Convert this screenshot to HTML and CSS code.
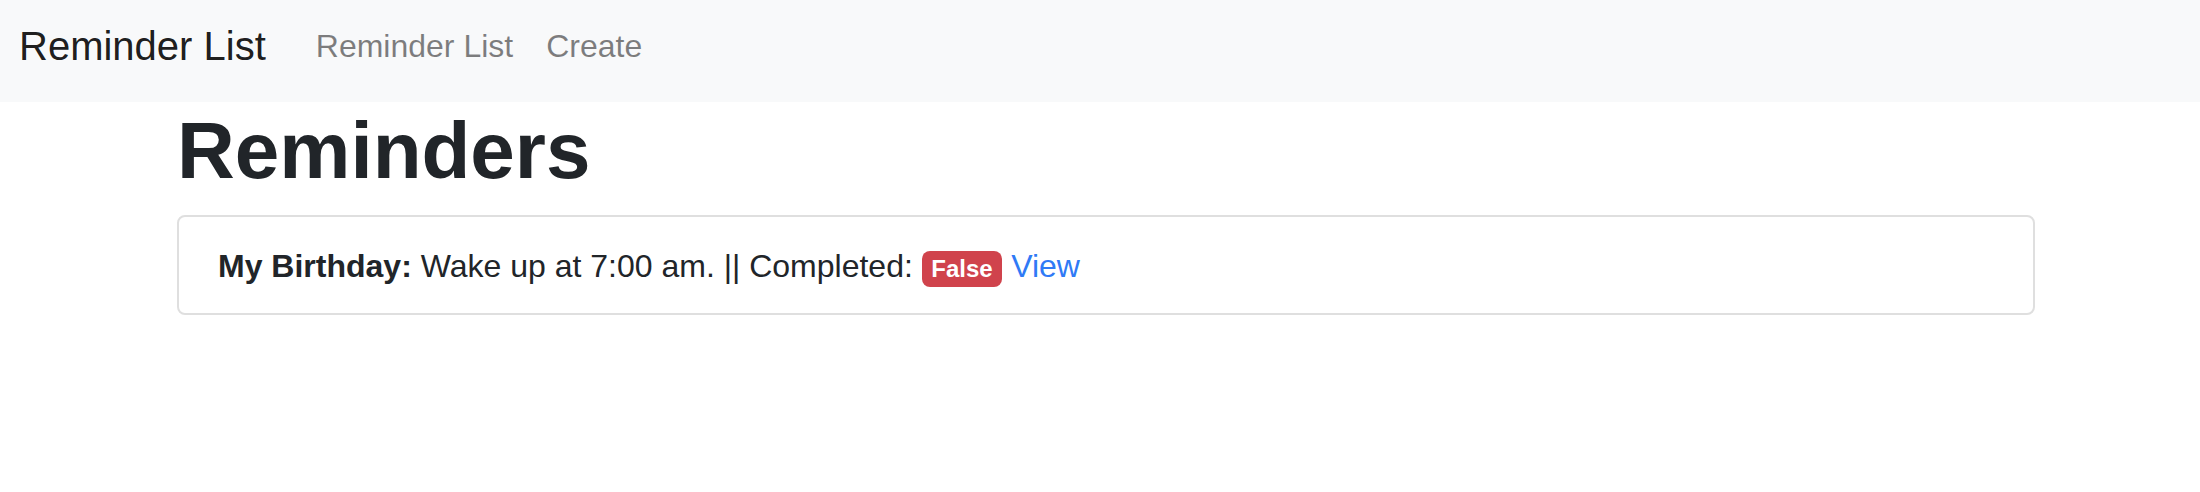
FILE: index.html
```html
<!DOCTYPE html>
<html lang="en">
<head>
<meta charset="utf-8">
<title>Reminder List</title>
<link rel="stylesheet" href="styles.css">
</head>
<body>
<nav class="navbar">
  <a class="brand" href="#">Reminder List</a>
  <ul class="nav-links">
    <li><a class="nav-link" href="#">Reminder List</a></li>
    <li><a class="nav-link" href="#">Create</a></li>
  </ul>
</nav>
<main class="container">
  <h1 class="title">Reminders</h1>
  <ul class="list-group">
    <li class="list-item"><strong>My Birthday:</strong> Wake up at 7:00 am. || Completed: <span class="badge">False</span> <a class="view-link" href="#">View</a></li>
  </ul>
</main>
</body>
</html>
```

FILE: styles.css
```css
* { box-sizing: border-box; }
html, body {
  margin: 0;
  padding: 0;
  background: #ffffff;
}
body {
  font-family: "Liberation Sans", Arial, Helvetica, sans-serif;
  font-size: 32px;
  line-height: 1.5;
  color: #212529;
}
a { text-decoration: none; }

.navbar {
  display: flex;
  align-items: center;
  height: 102px;
  padding: 0 0 10px 19px;
  background: #f8f9fa;
}
.brand {
  font-size: 40px;
  line-height: 60px;
  color: rgba(0, 0, 0, 0.9);
  margin-right: 34px;
}
.nav-links {
  display: flex;
  list-style: none;
  margin: 0;
  padding: 0;
}
.nav-link {
  display: block;
  padding: 0 17px 0 16px;
  line-height: 48px;
  color: rgba(0, 0, 0, 0.5);
}

.container {
  margin-left: 177px;
  width: 1858px;
  padding-top: 1px;
}
.title {
  margin: 0 0 16px;
  font-size: 80px;
  line-height: 1.2;
  font-weight: 700;
  color: #212529;
}
.list-group {
  list-style: none;
  margin: 0;
  padding: 0;
}
.list-item {
  border: 2px solid #dfdfdf;
  border-radius: 8px;
  padding: 25px 39px 23px;
  line-height: 48px;
}
.list-item strong { font-weight: 700; }
.badge {
  display: inline-block;
  font-size: 24px;
  font-weight: 700;
  line-height: 1;
  padding: 6px 9.6px;
  border-radius: 8px;
  color: #ffffff;
  background: #d0434c;
  vertical-align: baseline;
}
.view-link { color: #2f7af6; }
```
